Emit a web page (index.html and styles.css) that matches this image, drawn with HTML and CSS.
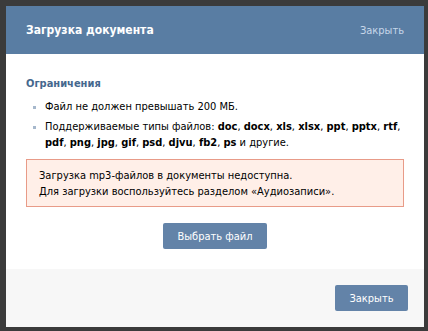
FILE: index.html
```html
<!DOCTYPE html>
<html lang="ru">
<head>
  <meta charset="UTF-8" />
  <title>Загрузка документа</title>
  <link rel="stylesheet" href="styles.css">
</head>
<body>
  <div class="box">
    <div class="box-head">
      <div class="box-title">Загрузка документа</div>
      <a class="box-close" href="#">Закрыть</a>
    </div>
    <div class="box-body">
      <div class="limits-title">Ограничения</div>
      <ul class="limits">
        <li>Файл не должен превышать 200 МБ.</li>
        <li>Поддерживаемые типы файлов: <b>doc</b>, <b>docx</b>, <b>xls</b>, <b>xlsx</b>, <b>ppt</b>, <b>pptx</b>, <b>rtf</b>, <b>pdf</b>, <b>png</b>, <b>jpg</b>, <b>gif</b>, <b>psd</b>, <b>djvu</b>, <b>fb2</b>, <b>ps</b> и другие.</li>
      </ul>
      <div class="error">
        Загрузка mp3-файлов в документы недоступна.<br>
        Для загрузки воспользуйтесь разделом «Аудиозаписи».
      </div>
      <div class="upload-row">
        <button class="flat-button">Выбрать файл</button>
      </div>
    </div>
    <div class="box-foot">
      <button class="flat-button">Закрыть</button>
    </div>
  </div>
</body>
</html>
```

FILE: styles.css
```css
body {
  margin: 0;
  padding: 6px 4px 5px 6px;
  background: #3b3b3b;
  font-family: "DejaVu Sans Condensed", "DejaVu Sans", sans-serif;
  font-stretch: condensed;
  font-size: 11px;
  color: #000;
}
.box {
  width: 418px;
  background: #fff;
}
.box-head {
  height: 48px;
  background: #597da3;
  display: flex;
  align-items: center;
  justify-content: space-between;
  padding: 0 20px;
}
.box-title {
  color: #fff;
  font-weight: bold;
  font-size: 12px;
}
.box-close {
  color: #c7d7e9;
  text-decoration: none;
  font-size: 11px;
}
.box-body {
  padding: 22px 20px 20px;
}
.limits-title {
  color: #45688e;
  font-weight: bold;
  line-height: 16px;
}
.limits {
  list-style: none;
  margin: 7px 0 8px;
  padding: 0 0 0 19px;
  line-height: 16px;
}
.limits li {
  position: relative;
  margin-bottom: 4px;
}
.limits li:last-child {
  margin-bottom: 0;
}
.limits li::before {
  content: "";
  position: absolute;
  left: -12px;
  top: 7px;
  width: 3px;
  height: 3px;
  background: #a6b8cc;
}
.error {
  background: #ffefe8;
  border: 1px solid #e89b88;
  padding: 8px 12px 6px;
  line-height: 16px;
}
.upload-row {
  display: flex;
  justify-content: center;
  margin-top: 16px;
}
.flat-button {
  font-family: inherit;
  font-stretch: condensed;
  font-size: 11px;
  color: #fff;
  background: #6383a8;
  border: none;
  border-radius: 2px;
  height: 26px;
  padding: 0;
  white-space: nowrap;
}
.upload-row .flat-button {
  width: 104px;
}
.box-foot {
  background: #f7f7f7;
  display: flex;
  justify-content: flex-end;
  padding: 16px;
}
.box-foot .flat-button {
  width: 73px;
}
```
